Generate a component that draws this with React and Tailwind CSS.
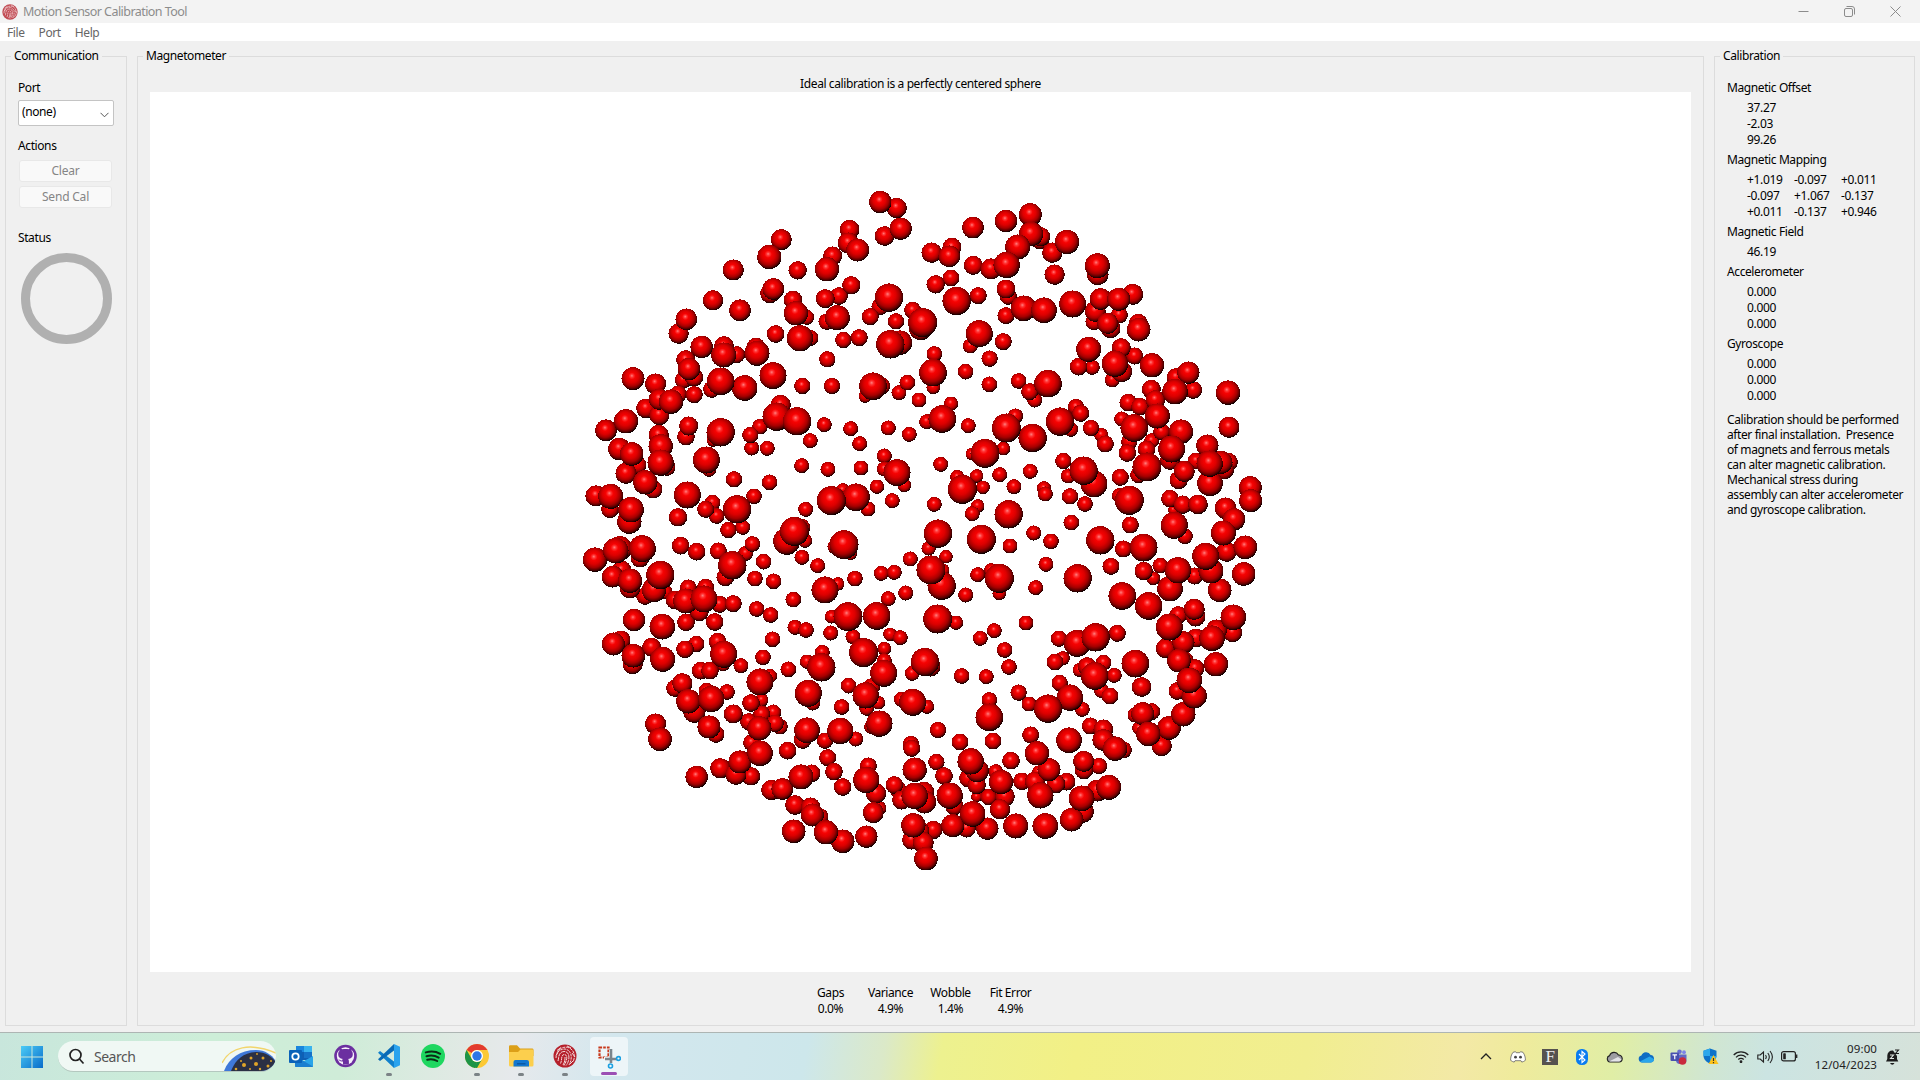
import React from "react";

// Magnetometer samples, grouped by canvas sector. Each sample is
// [x, y, radius] in thirds of a pixel, relative to the sector's origin.
const SECTORS = [
  {
    x: 420, y: 88,
    points: [
      [931,66,33],[980,84,30],[992,146,33],[944,168,29],[839,149,29],[835,189,31],[863,210,34],[788,228,28],[771,268,36],[634,179,31],
      [598,231,36],[490,270,31],[683,271,27],[610,327,32],[600,340,29],[429,361,30],[510,391,32],[349,418,32],[326,461,30],[844,316,27],
      [807,348,26],[766,356,28],[957,353,42],[930,380,25],[901,410,25],[669,360,27],[678,400,36],[710,412,22],[802,413,37],[770,425,24],
      [1028,391,25],[978,424,24],[1052,445,35],[617,462,26],[690,475,39],[722,474,23],[820,480,24],[868,473,25],[395,501,33],[462,498,29],
      [461,525,37],[500,524,25],[558,501,27],[561,520,37],[772,538,24],[961,493,42],[990,488,36],[347,539,28],[357,567,33],[609,587,40],
      [189,596,34],[257,612,31],[340,600,25],[372,592,27],[452,604,41],[524,624,38],[425,628,25],[697,618,24],[786,618,24],[909,619,41],
      [935,618,25],[886,648,20],[1012,608,23],[987,638,22],[1047,660,22],[268,658,31],[303,665,36],[325,642,25],[373,644,25],[228,685,29],
      [268,705,30],[632,675,30],
    ],
  },
  {
    x: 770, y: 88,
    points: [
      [331,104,34],[258,123,33],[159,143,32],[333,162,36],[362,170,28],[360,180,27],[293,201,37],[441,186,36],[397,218,30],[96,202,28],
      [35,218,30],[88,229,32],[160,256,28],[213,267,31],[260,255,39],[404,284,30],[47,313,27],[93,294,25],[532,257,37],[533,283,32],
      [110,363,42],[175,347,25],[258,327,28],[265,349,25],[258,407,25],[311,385,38],[372,391,38],[458,372,40],[542,357,32],[596,358,34],
      [638,343,31],[526,394,31],[522,425,25],[563,430,31],[572,445,29],[598,405,25],[655,430,28],[656,449,35],[8,428,43],[178,461,40],
      [151,498,22],[250,485,25],[209,536,24],[43,522,23],[137,575,23],[39,578,41],[40,622,20],[208,613,23],[506,508,37],[476,560,26],
      [517,562,22],[604,503,28],[644,528,25],[585,551,39],[605,575,31],[577,600,22],[696,556,36],[296,603,23],[329,635,25],[344,660,22],
      [384,611,41],[805,578,33],[768,592,27],[765,635,38],[820,630,26],[924,638,36],[694,628,28],[706,660,29],[625,668,26],[660,680,26],
      [93,671,21],[468,681,24],[482,698,24],[286,708,22],
    ],
  },
  {
    x: 420, y: 318,
    points: [
      [168,34,36],[108,61,32],[356,48,28],[348,80,26],[452,67,42],[430,90,20],[570,50,23],[541,75,24],[545,114,22],[592,115,22],
      [620,20,42],[681,34,42],[763,44,22],[721,92,22],[842,56,22],[869,101,22],[955,54,22],[1018,73,22],[266,75,30],[272,109,36],
      [148,117,33],[185,132,35],[203,165,26],[168,190,31],[272,158,39],[291,172,25],[226,217,36],[250,238,27],[409,150,40],[417,178,22],
      [695,167,22],[774,178,22],[873,174,22],[943,138,22],[943,177,22],[981,188,40],[1003,226,20],[492,208,24],[599,217,23],[352,255,40],
      [552,259,23],[78,258,31],[122,259,37],[120,298,26],[183,299,38],[178,335,36],[428,278,23],[407,298,25],[440,318,23],[324,322,27],
      [501,298,42],[475,360,24],[518,352,22],[707,298,22],[784,272,43],[858,262,41],[818,240,20],[894,297,22],[921,230,21],[967,272,22],
      [673,364,43],[650,394,40],[695,352,25],[705,392,21],[822,404,43],[795,410,22],[842,432,18],[332,407,26],[380,425,26],[445,423,25],
      [547,402,23],[527,430,22],[487,466,42],[466,502,26],[581,455,23],[696,442,22],[743,467,22],[75,449,36],[150,415,36],[137,422,38],
      [217,416,40],[210,445,27],[155,480,28],[128,500,32],[180,512,36],[180,535,30],[271,495,42],[252,540,36],[225,558,26],[285,545,22],
      [355,534,25],[407,532,25],[347,573,37],[402,567,40],[315,570,27],[388,605,28],[449,583,25],[490,581,25],[348,637,26],[434,636,26],
      [192,630,33],[277,650,38],[555,506,23],[611,514,23],[670,569,23],[560,597,23],[602,615,23],[765,540,40],[803,522,20],[855,506,23],
      [934,490,22],[973,487,22],[1021,447,22],[1007,549,22],[955,566,22],[834,620,43],[920,618,41],[785,620,20],[675,652,22],[708,660,23],
      [782,669,22],[849,680,22],[608,688,23],[960,673,20],[991,683,22],[153,690,28],[130,702,34],[443,695,26],
    ],
  },
  {
    x: 770, y: 318,
    points: [
      [67,27,41],[20,35,22],[145,47,22],[259,54,43],[290,18,20],[338,84,42],[420,35,42],[452,58,22],[482,10,25],[513,54,24],
      [544,75,21],[556,102,25],[605,27,22],[643,54,41],[712,18,37],[725,65,25],[783,65,36],[755,117,40],[628,95,24],[622,129,26],
      [695,92,22],[680,118,26],[250,116,20],[195,130,43],[155,132,18],[750,150,29],[927,52,31],[862,107,33],[828,153,25],[869,161,39],
      [903,157,34],[925,157,28],[912,178,30],[870,220,38],[681,171,43],[655,195,24],[793,184,31],[776,210,27],[62,163,22],[112,201,21],
      [170,198,20],[239,194,22],[282,230,22],[331,184,22],[430,153,24],[445,198,22],[491,182,42],[522,222,40],[450,259,24],[495,282,23],
      [601,202,25],[127,238,43],[189,232,20],[43,283,22],[173,288,20],[157,311,22],[372,235,21],[376,252,22],[266,313,42],[628,271,43],
      [598,257,22],[750,266,26],[788,284,27],[834,283,29],[760,300,15],[763,346,40],[795,379,23],[991,233,34],[992,272,34],[917,295,32],
      [942,328,33],[910,369,37],[976,412,35],[920,425,30],[857,439,40],[873,483,37],[971,492,35],[454,338,23],[631,345,25],[341,369,22],
      [393,394,23],[184,388,43],[270,408,22],[54,371,42],[26,415,21],[78,440,20],[541,391,42],[610,417,25],[671,413,41],[573,469,25],
      [378,463,22],[33,480,43],[65,527,42],[70,480,18],[173,494,22],[213,480,20],[238,505,43],[238,550,20],[137,555,22],[347,533,22],
      [473,505,42],[671,483,27],[700,505,20],[721,467,23],[774,481,39],[824,498,25],[750,536,38],[899,541,35],[607,558,41],[686,588,41],
      [940,622,38],[53,627,43],[108,638,21],[223,662,22],[181,685,22],[318,639,22],[417,686,24],[472,700,40],[527,682,42],[592,670,25],
      [823,598,31],[827,620,29],[775,615,26],[748,651,40],[890,660,31],[938,668,28],[876,685,38],[828,684,28],[790,697,33],[737,715,29],
    ],
  },
  {
    x: 420, y: 548,
    points: [
      [245,22,28],[345,28,26],[379,12,24],[461,43,40],[190,47,35],[188,72,30],[278,58,37],[881,38,43],[943,26,20],[757,37,22],
      [579,52,23],[513,77,22],[655,88,23],[711,65,21],[754,82,42],[943,62,22],[941,100,40],[1027,100,22],[392,92,26],[420,92,26],
      [460,73,20],[570,126,40],[600,108,21],[337,130,30],[314,145,25],[355,184,36],[373,215,33],[410,153,24],[424,177,39],[471,156,23],
      [543,189,26],[575,180,20],[490,222,28],[575,222,25],[536,245,25],[610,217,23],[568,265,36],[615,250,26],[630,260,23],[257,252,31],
      [270,298,35],[417,261,34],[438,283,25],[545,308,25],[570,340,38],[510,366,34],[451,385,30],[498,403,31],[543,409,27],[380,411,33],
      [653,332,26],[715,160,40],[728,188,23],[711,271,38],[698,300,26],[765,302,24],[811,273,39],[857,297,22],[815,201,23],[836,137,23],
      [887,166,39],[905,140,25],[925,188,20],[890,205,22],[928,251,39],[905,260,22],[773,353,25],[792,395,26],[818,441,26],[895,378,25],
      [889,420,39],[918,460,30],[693,411,37],[725,400,26],[637,447,32],[604,450,30],[675,495,29],[722,502,29],[727,525,34],[750,530,25],
      [768,577,36],[818,604,35],[671,574,35],[889,590,33],[910,518,31],[927,505,22],[1023,312,24],[1025,325,25],[1034,389,36],[973,435,26],
      [985,450,25],[995,480,28],[1034,468,39],[1030,556,36],[1025,600,28],[994,178,22],[1028,187,40],
    ],
  },
  {
    x: 770, y: 548,
    points: [
      [15,66,42],[32,80,29],[125,108,23],[199,110,22],[267,81,23],[254,30,23],[208,180,23],[208,232,41],[219,303,25],[54,270,24],
      [120,306,25],[21,200,21],[405,66,25],[428,55,21],[478,90,20],[502,80,28],[551,68,23],[524,108,41],[583,106,22],[545,152,22],
      [570,168,25],[646,71,41],[665,141,29],[296,158,24],[327,192,22],[384,206,42],[419,129,24],[450,173,39],[487,208,22],[511,258,25],
      [550,268,29],[550,300,32],[585,326,36],[610,330,25],[447,301,38],[332,285,25],[351,340,36],[387,389,34],[355,395,18],[491,364,31],
      [492,390,27],[537,378,24],[273,362,26],[49,366,24],[72,408,26],[12,456,30],[14,486,34],[152,364,39],[172,392,34],[145,415,27],
      [170,435,27],[227,395,22],[243,426,36],[255,470,29],[206,471,24],[170,470,16],[240,508,30],[89,467,39],[103,498,27],[158,522,38],
      [98,557,34],[140,565,27],[202,566,33],[287,558,37],[376,558,38],[455,539,35],[488,515,33],[485,475,38],[361,466,39],[306,424,26],
      [345,425,30],[408,432,27],[440,425,26],[532,452,32],[566,442,37],[40,570,27],[10,608,31],[18,656,35],[0,572,28],[668,221,34],
      [645,225,22],[695,215,25],[657,265,20],[685,282,36],[747,264,35],[790,223,36],[725,318,30],[823,168,37],[772,153,26],[808,121,38],
      [826,85,27],[777,62,35],[795,60,25],[888,73,36],
    ],
  },
];

// Nearer samples are larger, so painting by radius gives the depth order.
const SAMPLES = SECTORS.flatMap((s) =>
  s.points.map(([x, y, r]) => ({ x: s.x + x / 3, y: s.y + y / 3, r: r / 3 + 0.2 }))
).sort((a, b) => a.r - b.r);

function SpherePlot() {
  return (
    <svg width="1541" height="880" viewBox="0 0 1541 880" className="block bg-white">
      <defs>
        <radialGradient id="ball" cx="0.46" cy="0.43" r="0.57" fx="0.45" fy="0.37">
          <stop offset="0" stopColor="#ff8080" />
          <stop offset="0.12" stopColor="#ff3434" />
          <stop offset="0.26" stopColor="#f60202" />
          <stop offset="0.5" stopColor="#dc0000" />
          <stop offset="0.72" stopColor="#a60000" />
          <stop offset="0.88" stopColor="#5c0000" />
          <stop offset="1" stopColor="#0c0000" />
        </radialGradient>
      </defs>
      {SAMPLES.map((s, i) => (
        <circle key={i} cx={s.x} cy={s.y} r={s.r} fill="url(#ball)" shapeRendering="crispEdges" />
      ))}
    </svg>
  );
}

function Fingerprint({ size }) {
  return (
    <svg width={size} height={size} viewBox="0 0 24 24">
      <circle cx="12" cy="12" r="11.5" fill="#b5202b" />
      <g fill="none" stroke="#f4d9da" strokeWidth="1">
        <path d="M4 9c2-5 9-8 14-4 4 3 4 9 2 13" strokeDasharray="3 .8" />
        <path d="M3 14c0-6 4-9 9-9 5 1 7 5 6 11-.3 2-1 3-2 5" strokeDasharray="2.4 .8" />
        <path d="M5 17c1-3 0-9 6-9.500 5 0 5.500 5 4.500 9-.5 2-1.500 4-2.500 5" strokeDasharray="4 .7" />
        <path d="M7.500 19.500c2-4 0-9 4-9 4 .5 2 7-.5 11" strokeDasharray="3 .6" />
        <path d="M10 21c2-3 2-6 2-8M4 6.500l4-3M14 2l4 2M3 11.500l2-3M19 9l3 4M17 20l3-3" />
      </g>
    </svg>
  );
}

function Panel({ title, className, children }) {
  return (
    <fieldset className={`h-[978px] min-w-0 shrink-0 border border-[#dcdcdc] ${className}`}>
      <legend className="ml-[5px] h-4 px-[3px] leading-4">{title}</legend>
      {children}
    </fieldset>
  );
}

function Readings({ title, rows }) {
  return (
    <>
      <h3 className="h-4 leading-4">{title}</h3>
      <div className="ml-5 grid grid-cols-[47px_47px_47px] py-1 leading-4 tracking-[-0.35px]">
        {rows.map((row, i) =>
          [0, 1, 2].map((c) => (
            <span key={`${i}-${c}`} className="h-4">{row[c] ?? ""}</span>
          ))
        )}
      </div>
    </>
  );
}

const NOTE = [
  "Calibration should be performed",
  "after final installation.\u00a0 Presence",
  "of magnets and ferrous metals",
  "can alter magnetic calibration.",
  "Mechanical stress during",
  "assembly can alter accelerometer",
  "and gyroscope calibration.",
];

const STATS = [["Gaps", "0.0%"], ["Variance", "4.9%"], ["Wobble", "1.4%"], ["Fit Error", "4.9%"]];

function TitleBar() {
  return (
    <header className="flex h-[23px] items-center bg-[#f3f3f3] text-[#8c8c8c]">
      <div className="ml-[2px] opacity-80"><Fingerprint size={16} /></div>
      <span className="mt-px ml-[5px] text-[12.500px] tracking-[-0.55px]">Motion Sensor Calibration Tool</span>
      <div className="mr-[19px] mb-px ml-auto flex items-center gap-[35px]">
        <svg width="11" height="11" viewBox="0 0 11 11"><path d="M.5 5.500h10" stroke="#8c8c8c" /></svg>
        <svg width="11" height="11" viewBox="0 0 11 11" fill="none" stroke="#8c8c8c">
          <rect x="0.500" y="2.500" width="8" height="8" rx="1.500" />
          <path d="M2.500.5h5.500a2.500 2.500 0 0 1 2.500 2.500v5.500" />
        </svg>
        <svg width="11" height="11" viewBox="0 0 11 11"><path d="M.5.5l10 10M10.500.5l-10 10" stroke="#8c8c8c" /></svg>
      </div>
    </header>
  );
}

function TaskItem({ children, dot }) {
  return (
    <div className="flex h-[48px] w-11 flex-col items-center">
      <div className="flex h-[46px] items-center">{children}</div>
      {dot && <div className="-mt-[6px] h-[3px] w-[6px] rounded-full bg-[#7b8286]" />}
    </div>
  );
}

function Taskbar() {
  return (
    <footer className="flex h-[48px] items-center border-t border-[#adb5b3] bg-[linear-gradient(100deg,#c8e6dc_0%,#cdeed8_11%,#cfecd8_18%,#e3e9e6_25%,#e6e9ec_27%,#d3e7ee_32%,#cde7eb_42%,#dbe9c8_46%,#edf18f_49%,#f2f086_56%,#f1ee90_68%,#f3e9a6_76%,#efeb9c_79%,#e0eea6_84%,#d0e6d2_89%,#cbe4e2_92%,#d6e2da_100%)] text-[#222]">
      <svg className="ml-[20px]" width="24" height="24" viewBox="0 0 24 24">
        <defs>
          <linearGradient id="win" x1="0" y1="0" x2="24" y2="24" gradientUnits="userSpaceOnUse">
            <stop stopColor="#4fd0f8" /><stop offset="1" stopColor="#0668c8" />
          </linearGradient>
        </defs>
        <path d="M1 1h10.500v10.500H1zM12.500 1H23v10.500H12.500zM1 12.500h10.500V23H1zM12.500 12.500H23V23H12.500z" fill="url(#win)" />
      </svg>
      <div className="ml-[14px] flex h-[31px] w-[218px] items-center overflow-hidden rounded-full border-b border-[#b4c8bf] bg-[#f0f8f4]">
        <svg className="ml-[10px]" width="17" height="17" viewBox="0 0 17 17" fill="none" stroke="#222" strokeWidth="1.700">
          <circle cx="7.500" cy="7" r="5.500" /><path d="M11.500 11l4 4.500" />
        </svg>
        <span className="ml-[9px] text-[14px] tracking-[-0.5px] text-[#555]">Search</span>
        <svg className="ml-auto" width="54" height="31" viewBox="0 0 54 31">
          <path d="M0 22C8 6 28 1 54 12" fill="none" stroke="#f2d56c" strokeWidth="1.500" />
          <path d="M2 30C7 17 18 9 34 9c9 0 16 5 19 10v11z" fill="#3f78d8" />
          <path d="M9 30C14 18 21 12 34 11c10 0 16 5 19 9v10z" fill="#2b3044" />
          <g fill="#e0a429">
            <circle cx="22" cy="24" r="2" /><circle cx="34" cy="23" r="2" /><circle cx="29" cy="17" r="1.500" />
            <circle cx="41" cy="17" r="1.500" /><circle cx="46" cy="25" r="1.500" /><circle cx="14" cy="28" r="1.300" />
            <circle cx="38" cy="28" r="1.200" /><circle cx="35" cy="13" r=".9" />
            <circle cx="28" cy="28" r="1" /><circle cx="49" cy="20" r="1" /><circle cx="19" cy="20" r="1" />
          </g>
        </svg>
      </div>
      <div className="ml-[3px] flex">
        <TaskItem>
          <svg width="26" height="24" viewBox="0 0 26 24">
            <path d="M8 2h16v14H8z" fill="#0f5fb4" /><path d="M8 2h8v6H8z" fill="#1a86dd" /><path d="M16 2h8v6h-8z" fill="#39b3ee" />
            <path d="M16 8h8v6h-8z" fill="#1672c8" /><path d="M7 12l9 5 9-5v10a1 1 0 0 1-1 1H8a1 1 0 0 1-1-1z" fill="#2aa4e8" />
            <path d="M7 12l18 10.500a1 1 0 0 1-1 .5H8a1 1 0 0 1-1-1z" fill="#1b7fd0" />
            <rect x="1" y="6" width="13" height="13" rx="1" fill="#0a62b9" />
            <circle cx="7.500" cy="12.500" r="3.200" fill="none" stroke="#fff" strokeWidth="1.800" />
          </svg>
        </TaskItem>
        <TaskItem>
          <svg width="23" height="24" viewBox="0 0 23 24">
            <circle cx="11.500" cy="12" r="11.300" fill="#6b2fa0" /><circle cx="11.500" cy="12" r="8.700" fill="#f6eefb" />
            <path d="M9 20.500v-3c-3 .6-3.600-1.500-4.800-2 2-.4 2 1.300 4 1.100-.1-.8.200-1.300.6-1.600-3-.4-4.600-1.800-4.600-4.800 0-1.400.4-2.300 1.200-3.100-.3-.8-.2-2 .1-3 1.200 0 2.200.7 2.900 1.200 2-.5 4.200-.5 6.200 0 .7-.5 1.700-1.200 2.900-1.200.3 1 .4 2.200.1 3 .8.800 1.200 1.700 1.200 3.100 0 3-1.600 4.400-4.600 4.800.5.500.7 1.200.7 2.200v3.300z" fill="#6b2fa0" />
          </svg>
        </TaskItem>
        <TaskItem dot>
          <svg width="24" height="24" viewBox="0 0 24 24">
            <path d="M17 0v24L1 8.800 3 7l14 10.500z" fill="#1180cc" /><path d="M17 0L1 15.200 3 17 17 6.500z" fill="#0a6ab6" />
            <path d="M17 0l6 2.700v18.600L17 24z" fill="#2ba3ee" />
          </svg>
        </TaskItem>
        <TaskItem>
          <svg width="24" height="24" viewBox="0 0 24 24">
            <circle cx="12" cy="12" r="12" fill="#1ed760" />
            <path d="M4.800 8.400c4.800-1.400 10.300-1 14.400 1.400M5.500 12.200c4.200-1.200 8.600-.7 12.200 1.400M6.200 15.800c3.600-.9 7-.5 10 1.200" fill="none" stroke="#0b2a15" strokeWidth="2" strokeLinecap="round" />
          </svg>
        </TaskItem>
        <TaskItem dot>
          <svg width="24" height="24" viewBox="0 0 24 24">
            <circle cx="12" cy="12" r="12" fill="#fcc934" />
            <path d="M12 0a12 12 0 0 1 10.400 6H12a6 6 0 0 0-5.200 3L1.600 6A12 12 0 0 1 12 0z" fill="#e33b2e" />
            <path d="M1.600 6l5.200 9a6 6 0 0 0 5.200 3l-2 6A12 12 0 0 1 1.600 6z" fill="#1e9447" />
            <path d="M12 18a6 6 0 0 0 5.200-3L12 24a12 12 0 0 1-3-.4z" fill="#1e9447" />
            <circle cx="12" cy="12" r="6" fill="#fff" /><circle cx="12" cy="12" r="4.700" fill="#2f76e6" />
          </svg>
        </TaskItem>
        <TaskItem dot>
          <svg width="25" height="22" viewBox="0 0 25 22">
            <path d="M0 1.500Q0 .3 1.200.3H8l3 3.200h12.500Q24.500 3.500 24.500 5v6H0z" fill="#dc9f18" />
            <path d="M0 7h9l2.500-2.500h12Q24.500 4.500 24.500 6v14q0 1.500-1.500 1.500H1.500Q0 21.500 0 20z" fill="#fccf4d" />
            <path d="M4.500 21.500V17q0-2 2-2h11.500q2 0 2 2v4.500z" fill="#1377cf" /><path d="M8 18h8.500v1.500H8z" fill="#0b59a5" />
          </svg>
        </TaskItem>
        <TaskItem dot><Fingerprint size={24} /></TaskItem>
        <div className="flex w-11 justify-center">
          <div className="mt-[4px] flex h-[39px] w-[38px] flex-col items-center rounded-[4px] bg-[#edf5f8] pt-[8px]">
            <svg width="24" height="24" viewBox="0 0 24 24" fill="none">
              <rect x="2.500" y="2.500" width="9" height="10" stroke="#c8391b" strokeWidth="2.200" strokeDasharray="2.600 1.100" />
              <path d="M14 5v14M7 14h12" stroke="#f1f6f8" strokeWidth="4" />
              <path d="M14 4v14M8 14h12" stroke="#7b858c" strokeWidth="2.600" />
              <circle cx="21.500" cy="13.500" r="1.900" stroke="#1ba0e2" strokeWidth="1.600" /><circle cx="13.500" cy="21" r="2" stroke="#1ba0e2" strokeWidth="1.600" />
            </svg>
            <div className="mt-[3px] h-[3px] w-[16px] rounded-full bg-[#9b4fb4]" />
          </div>
        </div>
      </div>
      <div className="ml-auto flex items-center">
        {TRAY.map((icon, i) => (
          <div key={i} className="flex w-8 justify-center">{icon}</div>
        ))}
        <div className="ml-[3px] flex items-center">
          {STATUS.map((icon, i) => (
            <div key={i} className="flex w-6 justify-center">{icon}</div>
          ))}
        </div>
        <div className="w-[76px] text-right text-[11.500px] leading-4 tracking-[0.1px] whitespace-nowrap">
          <div>09:00</div>
          <div>12/04/2023</div>
        </div>
        <svg className="mr-[20px] ml-[8px]" width="15" height="16" viewBox="0 0 15 16">
          <path d="M1 12.500l1.300-2.500V6.500A5 5 0 0 1 8 1.500l4 5.500v3l1.300 2.500z" fill="#1c1c1c" />
          <path d="M5 14h4.500q-.8 1.800-2.200 1.800T5 14z" fill="#1c1c1c" />
          <path d="M5 6h3.500L5.500 9.500H9" fill="none" stroke="#dfe5e0" strokeWidth="1.100" />
          <path d="M10 1h3.500L10.500 4.500H14" fill="none" stroke="#1c1c1c" strokeWidth="1.100" />
        </svg>
      </div>
    </footer>
  );
}

const TRAY = [
  <svg width="12" height="7" viewBox="0 0 12 7"><path d="M1 6l5-5 5 5" fill="none" stroke="#222" strokeWidth="1.300" /></svg>,
  <svg width="16" height="12" viewBox="0 0 16 12">
    <path d="M3 1.300L5.500.7l.7 1h3.600l.7-1 2.500.6c1.600 2.300 2.500 5 2.400 8-1.200 1-2.400 1.500-3.600 1.800l-.8-1.400H5l-.8 1.400C3 10.800 1.800 10.300.6 9.300.5 6.300 1.400 3.600 3 1.300z" fill="#fff" stroke="#666" strokeWidth=".8" />
    <circle cx="5.500" cy="6.200" r="1.400" fill="#444" /><circle cx="10.500" cy="6.200" r="1.400" fill="#444" />
  </svg>,
  <div className="flex h-4 w-4 items-center justify-center bg-[#56524f] font-['Liberation_Serif',serif] text-[17px] leading-4 text-[#eee]">F</div>,
  <svg width="12" height="16" viewBox="0 0 12 16">
    <rect width="12" height="16" rx="5.500" fill="#0a7cf0" /><path d="M3 5l6 6-3 2.500v-11L9 5l-6 6" fill="none" stroke="#fff" strokeWidth="1.100" />
  </svg>,
  <svg width="17" height="12" viewBox="0 0 17 12">
    <path d="M4 11A3.300 3.300 0 0 1 3.600 4.600 4.800 4.800 0 0 1 12.400 4 3.500 3.500 0 0 1 13 11z" fill="#9d9da2" stroke="#222" strokeWidth="1.100" />
    <path d="M3 10.500l9-4.500 3.500 2.500-2 2z" fill="#e4e4e8" />
  </svg>,
  <svg width="17" height="12" viewBox="0 0 17 12">
    <path d="M4 11.500A3.500 3.500 0 0 1 3.400 4.600 5 5 0 0 1 12.600 4 3.800 3.800 0 0 1 13 11.500z" fill="#0f6cc4" />
    <path d="M2 10.500l9.500-5L16 8a3.500 3.500 0 0 1-3 3.500H4z" fill="#2aa5ea" />
  </svg>,
  <svg width="17" height="16" viewBox="0 0 17 16">
    <circle cx="9.500" cy="2.800" r="2.300" fill="#6b70d0" /><circle cx="14" cy="3.200" r="1.900" fill="#7b83eb" />
    <path d="M6 5.500h10.500V11a4 4 0 0 1-4 4H10a4 4 0 0 1-4-4z" fill="#6167c4" />
    <rect x="0.500" y="3.500" width="8.500" height="8.500" rx="1" fill="#4850b0" /><path d="M2.500 5.800h4.500M4.750 5.800v4.400" stroke="#fff" strokeWidth="1.200" />
    <circle cx="12.500" cy="12" r="3.800" fill="#c92a3c" />
  </svg>,
  <svg width="17" height="17" viewBox="0 0 17 17">
    <path d="M8 .5l6.500 2.300v5C14.500 11.500 11.500 14.300 8 15.500 4.500 14.300 1.500 11.500 1.500 7.800v-5z" fill="#0d72c9" />
    <path d="M8 .5v7.500H1.500V2.800zM8 8h6.500q-.5 5-6.500 7.500z" fill="#2ca7ec" />
    <path d="M11.500 7l5 9h-10z" fill="#fcc21b" /><path d="M11.500 10v3M11.500 14v1.200" stroke="#333" strokeWidth="1.200" />
  </svg>,
];

const STATUS = [
  <svg width="16" height="12" viewBox="0 0 16 12" fill="none" stroke="#222" strokeWidth="1.200">
    <path d="M.7 4a10.300 10.300 0 0 1 14.600 0M3 6.300a7 7 0 0 1 10 0M5.300 8.500a3.800 3.800 0 0 1 5.400 0" /><circle cx="8" cy="10.700" r=".8" fill="#222" />
  </svg>,
  <svg width="17" height="14" viewBox="0 0 17 14" fill="none" stroke="#222" strokeWidth="1.100">
    <path d="M.8 5h2.400L6.500 2v10L3.200 9H.8zM8.500 5q1.500 2 0 4M10.800 3q3 4 0 8M13 1q4.800 6 0 12" />
  </svg>,
  <svg width="17" height="11" viewBox="0 0 17 11">
    <rect x="0.600" y="0.600" width="13.800" height="9.300" rx="2" fill="none" stroke="#222" strokeWidth="1.200" />
    <rect x="2.200" y="2.300" width="2.600" height="6" rx=".6" fill="#222" /><path d="M15.700 3.500v3.500" stroke="#222" strokeWidth="1.300" />
  </svg>,
];

export default function App() {
  return (
    <div className="flex h-[1080px] w-[1920px] flex-col overflow-hidden bg-[#f0f0f0] font-['Noto_Sans','Open_Sans',sans-serif] text-[12px] tracking-[-0.4px] text-black">
      <TitleBar />
      <nav className="flex h-[18px] items-center gap-[14px] bg-white pt-[2px] pl-[7px] leading-4 text-[#666]">
        <span>File</span><span>Port</span><span>Help</span>
      </nav>
      <main className="flex grow items-start gap-[10px] pt-[7px] pl-[5px]">
        <Panel title="Communication" className="w-[122px]">
          <div className="flex flex-col pt-4 pl-[12px]">
            <div className="h-4 leading-4">Port</div>
            <div className="mt-1 flex h-[26px] w-[96px] items-center justify-between rounded-[2px] border border-[#c4c4c4] bg-white pr-[4px] pl-[3px]">
              <span className="-mt-[3px]">(none)</span>
              <svg className="mt-[3px]" width="9" height="6" viewBox="0 0 9 6"><path d="M.5.8l4 4 4-4" fill="none" stroke="#555" /></svg>
            </div>
            <div className="mt-3 h-4 leading-4">Actions</div>
            <button className="mt-[6px] ml-[1px] h-[22px] w-[93px] rounded-[3px] border border-[#e8e8e8] bg-[#f9f9f9] tracking-[-0.2px] text-[#858585]">Clear</button>
            <button className="mt-1 ml-[1px] h-[22px] w-[93px] rounded-[3px] border border-[#e8e8e8] bg-[#f9f9f9] tracking-[-0.2px] text-[#858585]">Send Cal</button>
            <div className="mt-[22px] h-4 leading-4">Status</div>
            <div className="mt-[7px] ml-[3px] h-[91px] w-[91px] rounded-full border-[9px] border-[#b0b0b0]" />
          </div>
        </Panel>
        <Panel title="Magnetometer" className="w-[1567px]">
          <div className="flex flex-col items-center pt-3">
            <div className="h-4 leading-4">Ideal calibration is a perfectly centered sphere</div>
            <SpherePlot />
            <div className="mt-[13px] grid grid-cols-[60px_60px_60px_60px] text-center leading-4">
              {STATS.map(([k, v]) => (
                <div key={k}><div>{k}</div><div>{v}</div></div>
              ))}
            </div>
          </div>
        </Panel>
        <Panel title="Calibration" className="w-[201px]">
          <div className="pt-4 pl-[12px]">
            <Readings title="Magnetic Offset" rows={[["37.27"], ["-2.03"], ["99.26"]]} />
            <Readings title="Magnetic Mapping" rows={[["+1.019", "-0.097", "+0.011"], ["-0.097", "+1.067", "-0.137"], ["+0.011", "-0.137", "+0.946"]]} />
            <Readings title="Magnetic Field" rows={[["46.19"]]} />
            <Readings title="Accelerometer" rows={[["0.000"], ["0.000"], ["0.000"]]} />
            <Readings title="Gyroscope" rows={[["0.000"], ["0.000"], ["0.000"]]} />
            <div className="mt-[4px] leading-[15px]">
              {NOTE.map((line) => <div key={line} className="whitespace-nowrap">{line}</div>)}
            </div>
          </div>
        </Panel>
      </main>
      <Taskbar />
    </div>
  );
}
